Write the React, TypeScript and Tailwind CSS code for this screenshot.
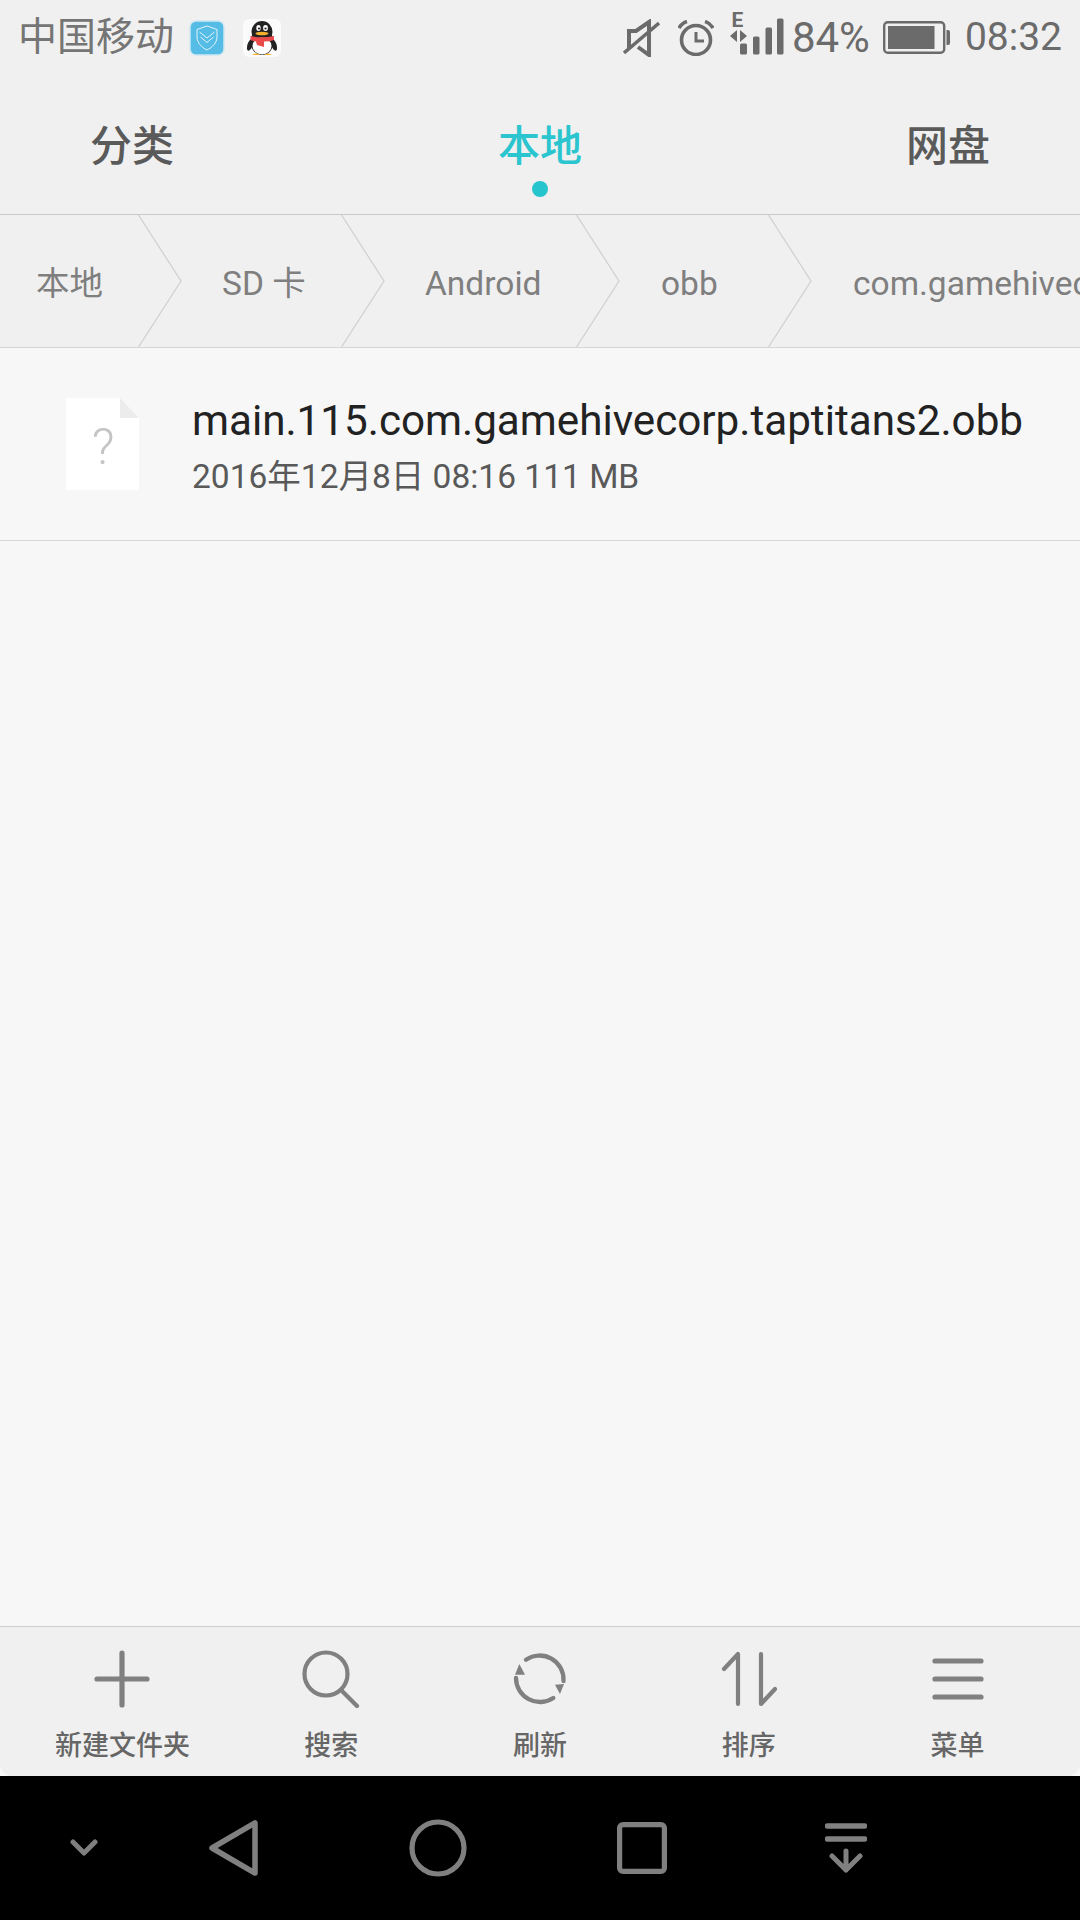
const crumbs = [
  { label: "本地", cls: "w-[139px] pl-[36px]" },
  { label: "SD 卡", cls: "w-[203px] pl-[83px]" },
  { label: "Android", cls: "w-[235px] pl-[83px]" },
  { label: "obb", cls: "w-[192px] pl-[84px]" },
];

function Chevron() {
  return (
    <svg className="absolute right-[-43px] top-0 h-[132px] w-[44px]" viewBox="0 0 44 132" fill="none">
      <path d="M0.5 0 L43 66 L0.5 132" stroke="#cfcfcf" strokeWidth="1.2" />
    </svg>
  );
}

function ShieldIcon() {
  return (
    <svg width="36" height="36" viewBox="0 0 36 36" fill="none">
      <rect x="1" y="1" width="34" height="34" rx="6" fill="#55bce6" stroke="#cde6f1" strokeWidth="1.5" />
      <path d="M18 6 L28 9.5 V17 C28 23 23 27.5 18 30 C13 27.5 8 23 8 17 V9.5 Z" stroke="#e3f4fb" strokeWidth="1" />
      <path d="M10.5 12 L18 18 L25.5 12 M11.5 17 L18 22.5 L24.5 17" stroke="#e3f4fb" strokeWidth="1" />
    </svg>
  );
}

function QQIcon() {
  return (
    <svg width="38" height="38" viewBox="0 0 38 38" fill="none">
      <rect width="38" height="38" rx="6" fill="#fbfbfb" />
      <ellipse cx="7" cy="26" rx="2.6" ry="6" fill="#222" transform="rotate(18 7 26)" />
      <ellipse cx="31" cy="26" rx="2.6" ry="6" fill="#222" transform="rotate(-18 31 26)" />
      <ellipse cx="19" cy="23" rx="11.5" ry="13" fill="#222" />
      <ellipse cx="19" cy="13" rx="10.5" ry="11" fill="#222" />
      <ellipse cx="19" cy="27" rx="9.5" ry="8.5" fill="#fff" />
      <path d="M7.5 17 Q19 19.5 31 17 L31 21 Q27 22.5 21 22.5 L21 28 L14 26 L13 22.5 Q10 22 7.5 21 Z" fill="#ea4a4a" />
      <ellipse cx="15.5" cy="9" rx="2.2" ry="3" fill="#fff" />
      <ellipse cx="22.5" cy="9" rx="2.4" ry="3" fill="#fff" />
      <circle cx="16" cy="9.5" r="1.1" fill="#222" />
      <circle cx="22.5" cy="9.5" r="1.1" fill="#222" />
      <ellipse cx="19" cy="14.5" rx="6.5" ry="1.8" fill="#f3b02c" />
      <path d="M9 36 Q13 33 17 36 Z M21 36 Q25 33 29 36 Z" fill="#f3b02c" />
    </svg>
  );
}

function MuteIcon() {
  return (
    <svg width="37" height="38" viewBox="0 0 37 38" fill="none" stroke="#6b6b6b" strokeWidth="4">
      <path d="M6 29 V12 H13 L26 3 V36 L15 28" strokeLinejoin="miter" />
      <path d="M1 34 L36 4" strokeWidth="3.4" />
    </svg>
  );
}

function AlarmIcon() {
  return (
    <svg width="36" height="36" viewBox="0 0 36 36" fill="none" stroke="#6b6b6b">
      <circle cx="18" cy="20" r="14.5" strokeWidth="3.6" />
      <path d="M18 12 V21 H26" strokeWidth="3" />
      <path d="M1 8 Q4 3 9 1.5 M35 8 Q32 3 27 1.5" strokeWidth="3.6" />
    </svg>
  );
}

function SignalIcon() {
  return (
    <svg width="56" height="60" viewBox="0 0 56 60" fill="#6b6b6b">
      <g transform="translate(0 4)">
        <text x="2.5" y="15" fontFamily="Roboto" fontWeight="700" fontSize="21">E</text>
        <path d="M8 18 V30 L1 24 Z M11 18 V30 L18 24 Z" />
        <rect x="11" y="31.5" width="7" height="11" rx="1.5" />
        <rect x="24" y="24.5" width="6.5" height="18" rx="1.5" />
        <rect x="36.5" y="15.5" width="6.5" height="27" rx="1.5" />
        <rect x="48" y="6.5" width="6.5" height="36" rx="1.5" />
      </g>
    </svg>
  );
}

function BatteryIcon() {
  return (
    <svg width="67" height="33" viewBox="0 0 67 33" fill="none">
      <rect x="1.2" y="1.2" width="60" height="30.6" rx="3.5" stroke="#6b6b6b" strokeWidth="2.4" />
      <rect x="5" y="5" width="46.5" height="23" fill="#6b6b6b" />
      <path d="M63.5 9 H65 Q67 9 67 11 V22 Q67 24 65 24 H63.5 Z" fill="#6b6b6b" />
    </svg>
  );
}

function PlusIcon() {
  return (
    <svg width="56" height="58" viewBox="0 0 56 58" fill="none" stroke="#808080" strokeWidth="5.2" strokeLinecap="round">
      <path d="M28 3 V55 M3 29 H53" />
    </svg>
  );
}

function SearchIcon() {
  return (
    <svg width="58" height="58" viewBox="0 0 58 58" fill="none" stroke="#808080" strokeWidth="4.2" strokeLinecap="round">
      <circle cx="24" cy="24" r="21.5" />
      <path d="M39 40 L55 56" />
    </svg>
  );
}

function RefreshIcon() {
  return (
    <svg width="54" height="54" viewBox="0 0 54 54" fill="none">
      <path d="M13 7.7 A24 24 0 0 1 50.5 29 M40.3 46 A24 24 0 0 1 3 26" stroke="#808080" strokeWidth="4.3" strokeLinecap="round" />
      <path d="M42 32.7 L51 32 L47 42 Z" fill="#808080" />
      <path d="M2 22.7 L12 22.7 L6.3 12 Z" fill="#808080" />
    </svg>
  );
}

function SortIcon() {
  return (
    <svg width="56" height="56" viewBox="0 0 56 56" fill="none" stroke="#808080" strokeWidth="4.2" strokeLinecap="round" strokeLinejoin="round">
      <path d="M3 18 L17 3 V53 M40 3 V53 L54 38" />
    </svg>
  );
}

function MenuIcon() {
  return (
    <svg width="52" height="46" viewBox="0 0 52 46" fill="none" stroke="#808080" strokeWidth="5.2" strokeLinecap="round">
      <path d="M3 5 H49 M3 23 H49 M3 41 H49" />
    </svg>
  );
}

const tools = [
  { label: "新建文件夹", icon: <PlusIcon /> },
  { label: "搜索", icon: <SearchIcon /> },
  { label: "刷新", icon: <RefreshIcon /> },
  { label: "排序", icon: <SortIcon /> },
  { label: "菜单", icon: <MenuIcon /> },
];

export default function App() {
  return (
    <div className="flex h-[1920px] w-[1080px] flex-col overflow-hidden bg-black font-['Roboto','Noto_Sans_CJK_SC',sans-serif]">
      {/* status bar */}
      <div className="flex h-[72px] items-center justify-between bg-[#f0f0f0] pl-[18px] pr-[18px] pt-[3px]">
        <div className="flex items-center text-[39px] leading-none text-[#757575]">
          <span>中国移动</span>
          <span className="ml-[15px] flex"><ShieldIcon /></span>
          <span className="ml-[18px] flex"><QQIcon /></span>
        </div>
        <div className="flex items-center text-[#6b6b6b]">
          <MuteIcon />
          <span className="ml-[18px] flex"><AlarmIcon /></span>
          <span className="ml-[15px] flex"><SignalIcon /></span>
          <span className="ml-[7px] text-[42px] leading-none">84%</span>
          <span className="ml-[13px] flex"><BatteryIcon /></span>
          <span className="ml-[15px] text-[39px] leading-none">08:32</span>
        </div>
      </div>

      {/* tabs */}
      <div className="flex h-[143px] items-start justify-between border-b border-[#c9c9c9] bg-[#f0f0f0] px-[90px] pt-[54px] text-[42px] font-medium leading-[42px] text-[#5a5a5a]">
        <span>分类</span>
        <div className="flex flex-col items-center text-[#2ac5ce]">
          <span>本地</span>
          <span className="mt-[13px] h-[16px] w-[16px] rounded-full bg-[#26c4cd]" />
        </div>
        <span>网盘</span>
      </div>

      {/* breadcrumb */}
      <div className="flex h-[133px] items-center overflow-hidden border-b border-[#d6d6d6] bg-[#f0f0f0] text-[33.5px] leading-none text-[#7f7f7f]">
        {crumbs.map((c) => (
          <div key={c.label} className={`relative flex h-full shrink-0 items-center pt-[6px] ${c.cls}`}>
            <span className="whitespace-nowrap">{c.label}</span>
            <Chevron />
          </div>
        ))}
        <span className="shrink-0 whitespace-nowrap pl-[84px] pt-[6px]">com.gamehivecorp.taptitans2</span>
      </div>

      {/* file list */}
      <div className="flex-1 bg-[#f7f7f7]">
        <div className="flex h-[193px] items-center border-b border-[#d8d8d8] pl-[66px]">
          <svg width="73" height="92" viewBox="0 0 73 92" className="shrink-0">
            <path d="M2 0 H54 L73 20 V90 Q73 92 71 92 H2 Q0 92 0 90 V2 Q0 0 2 0 Z" fill="#ffffff" />
            <path d="M54 0 L73 20 H54 Z" fill="#ececec" />
            <text x="37" y="66" textAnchor="middle" fontFamily="Roboto" fontWeight="300" fontSize="50" fill="#c4c4c4">?</text>
          </svg>
          <div className="ml-[53px] flex flex-col pt-[5px]">
            <span className="whitespace-nowrap text-[42.2px] leading-[48px] text-[#222222]">main.115.com.gamehivecorp.taptitans2.obb</span>
            <span className="mt-[13px] whitespace-nowrap text-[33.5px] leading-[38px] text-[#595959]">2016年12月8日 08:16 111 MB</span>
          </div>
        </div>
      </div>

      {/* bottom toolbar */}
      <div className="border-t border-[#cfcfcf] bg-[#f9f9f9]">
        <div className="grid h-[149px] grid-cols-5 rounded-b-[12px] bg-[#f0f0f0] px-[18px]">
          {tools.map((t) => (
            <div key={t.label} className="flex flex-col items-center">
              <div className="mt-[23px] flex h-[58px] items-center justify-center">{t.icon}</div>
              <span className="mt-[22px] whitespace-nowrap text-[27px] font-medium leading-[32px] text-[#666666]">{t.label}</span>
            </div>
          ))}
        </div>
      </div>

      {/* android nav bar */}
      <div className="flex h-[144px] items-center bg-black pl-[70px]">
        <svg width="28" height="18" viewBox="0 0 28 18" fill="none" stroke="#7f7f7f" strokeWidth="5" strokeLinecap="round" strokeLinejoin="round">
          <path d="M3 3 L14 14 L25 3" />
        </svg>
        <div className="ml-[34px] flex w-[204px] justify-center">
          <svg width="50" height="58" viewBox="0 0 50 58" fill="none" stroke="#808080" strokeWidth="5.5" strokeLinejoin="round">
            <path d="M46 4 V54 L3 29 Z" />
          </svg>
        </div>
        <div className="flex w-[204px] justify-center">
          <svg width="58" height="58" viewBox="0 0 58 58" fill="none" stroke="#808080" strokeWidth="5.2">
            <circle cx="29" cy="29" r="26" />
          </svg>
        </div>
        <div className="flex w-[204px] justify-center">
          <svg width="50" height="52" viewBox="0 0 50 52" fill="none" stroke="#808080" strokeWidth="5.2">
            <rect x="2.6" y="2.6" width="44.8" height="46.8" rx="3.5" />
          </svg>
        </div>
        <div className="flex w-[204px] justify-center">
          <svg width="42" height="50" viewBox="0 0 42 50" fill="none" stroke="#808080" strokeWidth="5" strokeLinecap="round" strokeLinejoin="round">
            <path d="M2.5 3 H39.5 M2.5 16 H39.5" strokeWidth="5.5" />
            <path d="M21 28 V47 M7 33 L21 47 L35 33" />
          </svg>
        </div>
      </div>
    </div>
  );
}
